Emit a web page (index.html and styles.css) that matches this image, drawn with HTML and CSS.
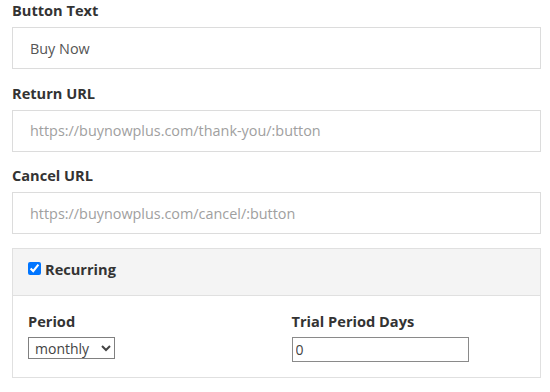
FILE: index.html
```html
<!DOCTYPE html>
<html lang="en">
<head>
    <meta charset="UTF-8">
    <meta name="viewport" content="width=device-width, initial-scale=1.0">
    <title>Button Settings</title>
    <link rel="stylesheet" href="styles.css">
</head>
<body>
  <form class="button-form">
    <div class="form-group">
      <label for="buttonText">Button Text</label>
      <input type="text" id="buttonText" class="form-control" value="Buy Now">
    </div>

    <div class="form-group">
      <label for="returnUrl">Return URL</label>
      <input type="text" id="returnUrl" class="form-control" placeholder="https://buynowplus.com/thank-you/:button">
    </div>

    <div class="form-group">
      <label for="cancelUrl">Cancel URL</label>
      <input type="text" id="cancelUrl" class="form-control" placeholder="https://buynowplus.com/cancel/:button">
    </div>

    <div class="panel">
      <div class="panel-heading">
        <label class="check-label"><input type="checkbox" checked> Recurring</label>
      </div>
      <div class="panel-body">
        <div class="row">
          <div class="col">
            <label for="period">Period</label>
            <select id="period" class="small-select">
              <option>monthly</option>
              <option>weekly</option>
              <option>yearly</option>
            </select>
          </div>
          <div class="col">
            <label for="trialDays">Trial Period Days</label>
            <input type="text" id="trialDays" class="small-input" value="0">
          </div>
        </div>
      </div>
    </div>
  </form>
</body>
</html>
```

FILE: styles.css
```css
* {
    box-sizing: border-box;
    margin: 0;
    padding: 0;
    font-family: 'Open Sans', 'Liberation Sans', sans-serif;
}

body {
    background: white;
    color: #333;
    font-size: 14px;
    line-height: 20px;
}

.button-form {
    padding: 0 9px 0 12px;
}

label {
    display: block;
    font-size: 14.6px;
    font-weight: 700;
    color: #333;
    margin-bottom: 7px;
}

.form-group {
    margin-bottom: 13.5px;
}

.form-control {
    display: block;
    width: 100%;
    height: 42px;
    padding: 0 17px;
    border: 1px solid #dcdcdc;
    border-radius: 0;
    font-size: 14.4px;
    color: #555;
    background: white;
    outline: none;
}

.form-control::placeholder {
    color: #a0a0a0;
}

.panel {
    margin-top: 1px;
    border: 1px solid #e0e0e0;
    background: white;
}

.panel-heading {
    background: #f4f4f4;
    border-bottom: 1px solid #e0e0e0;
    padding: 10px 15px 11px;
}

.check-label {
    display: flex;
    align-items: center;
    margin-bottom: 5px;
}

.check-label input {
    width: 13px;
    height: 13px;
    margin: 0 4px 0 0;
}

.panel-body {
    padding: 15px;
}

.row {
    display: flex;
    margin: 0 -15px;
}

.col {
    flex: 1;
    padding: 0 15px;
}

.col label {
    margin-bottom: 6px;
}

.small-select {
    width: 87px;
    height: 22px;
    font-size: 14px;
    color: #444;
    border: 1px solid #808080;
    border-radius: 0;
    background: white;
    padding: 0 0 0 2px;
}

.small-input {
    width: 177px;
    height: 25px;
    font-size: 14px;
    color: #444;
    border: 1px solid #8a8a8a;
    padding: 0 3px;
    outline: none;
}
```
